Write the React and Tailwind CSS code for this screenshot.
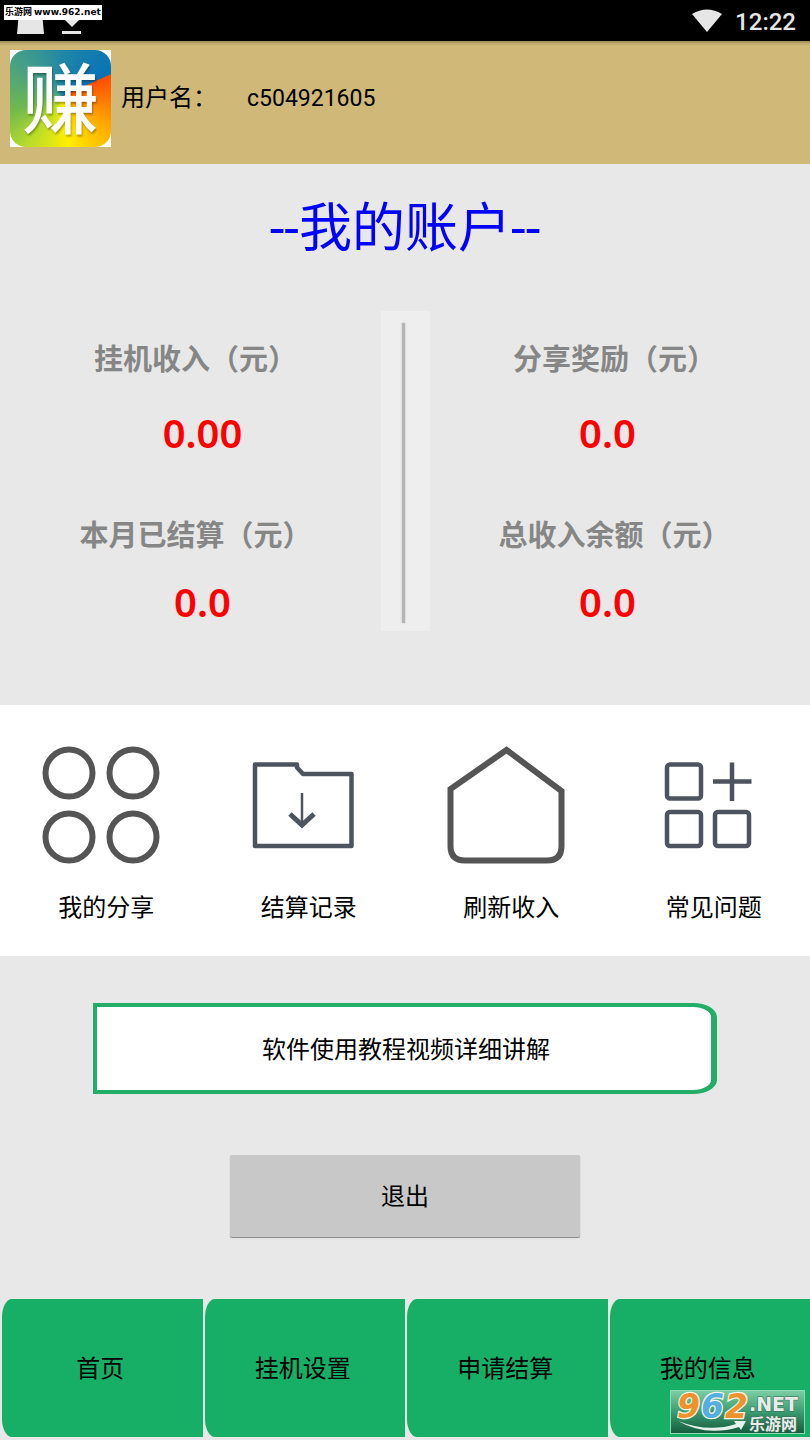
import React from 'react';

const ACCOUNT_ROWS = [
  [
    { label: '挂机收入（元）', value: '0.00' },
    { label: '分享奖励（元）', value: '0.0' }
  ],
  [
    { label: '本月已结算（元）', value: '0.0' },
    { label: '总收入余额（元）', value: '0.0' }
  ]
];

const NAV_ITEMS = ['首页', '挂机设置', '申请结算', '我的信息'];

function CirclesIcon() {
  return (
    <svg width="120" height="120" viewBox="0 0 120 120" fill="none" stroke="#555" strokeWidth="6" aria-hidden="true">
      <circle cx="28" cy="28" r="23.5" />
      <circle cx="92" cy="28" r="23.5" />
      <circle cx="28" cy="92" r="23.5" />
      <circle cx="92" cy="92" r="23.5" />
    </svg>
  );
}

function FolderIcon() {
  return (
    <svg width="120" height="120" viewBox="0 0 120 120" fill="none" stroke="#4d545f" strokeWidth="4.5" aria-hidden="true">
      <path d="M11 19.5H53V22.5L59 29H107.5V101H11Z" strokeLinejoin="round" />
      <path d="M58 48V78" strokeWidth="2.5" />
      <path d="M46 69L58 80L70 69" strokeWidth="5" />
    </svg>
  );
}

function HouseIcon() {
  return (
    <svg width="120" height="120" viewBox="0 0 120 120" fill="none" stroke="#555" strokeWidth="6" aria-hidden="true">
      <path d="M60.5 5L115.5 46V101Q115.5 115.5 101 115.5H19Q4.5 115.5 4.5 101V44Z" />
    </svg>
  );
}

function GridPlusIcon() {
  return (
    <svg width="120" height="120" viewBox="0 0 120 120" fill="none" stroke="#4d545f" strokeWidth="4.5" aria-hidden="true">
      <rect x="18" y="19.5" width="34" height="34" rx="3" />
      <rect x="18" y="67" width="34" height="34" rx="3" />
      <rect x="66" y="67" width="34" height="34" rx="3" />
      <path d="M83 17.5V56M64 36.5H102.5" />
    </svg>
  );
}

const SHORTCUTS = [
  { label: '我的分享', icon: <CirclesIcon /> },
  { label: '结算记录', icon: <FolderIcon /> },
  { label: '刷新收入', icon: <HouseIcon /> },
  { label: '常见问题', icon: <GridPlusIcon /> }
];

function StatusBar() {
  return (
    <div className="relative flex h-[41px] items-center justify-between bg-black pl-4 pr-3.5">
      <svg width="68" height="41" viewBox="0 0 68 41" fill="#e6e6e6" aria-hidden="true">
        <path d="M3 12H26L28 34H1Z" />
        <path d="M52 10H60V19H64L56 27L48 19H52Z" />
        <path d="M46 31H65V34H46Z" />
      </svg>
      <div className="flex items-center gap-3">
        <svg width="32" height="24" viewBox="0 0 32 24" fill="#e6e6e6" aria-hidden="true">
          <path d="M1 5Q16 -4 31 5L16 23Z" />
        </svg>
        <span className="pt-0.5 text-2xl leading-8 font-medium text-[#e6e6e6]">12:22</span>
      </div>
      <div className="absolute left-1 top-[5px] flex h-[15px] items-center gap-0.5 bg-white px-px font-['DejaVu_Sans','Noto_Sans_CJK_SC',sans-serif] text-[9px] leading-none font-bold whitespace-nowrap text-black">
        <span>乐游网</span>
        <span>www.962.net</span>
      </div>
    </div>
  );
}

function AppLogo() {
  return (
    <div className="h-[97px] w-[101px] shrink-0 bg-white">
      <div className="flex size-full items-center justify-center rounded-2xl bg-[conic-gradient(at_51%_48%,#2187a5_0deg,#0872b8_65deg,#ff4d00_66deg,#ff7a00_95deg,#ffb400_130deg,#fff000_172deg,#b9dc28_215deg,#6fb84f_255deg,#49a184_305deg,#2187a5_360deg)] pt-2">
        <span className="text-[77px] leading-none font-medium text-white [text-shadow:1px_2px_2px_rgb(0_0_0/0.3)]">赚</span>
      </div>
    </div>
  );
}

function AccountRow({ items, first }) {
  return (
    <div className="grid grid-cols-2 text-center">
      {items.map(({ label, value }, i) => (
        <div key={label}>
          <div className={`text-[29px] leading-10 font-bold text-[#868686] ${i === 0 ? 'pr-3.5' : 'pl-3.5'}`}>{label}</div>
          <div
            className={`font-['Noto_Sans','Open_Sans',sans-serif] text-[40px] leading-12 font-semibold text-[#ff0000] ${first ? 'mt-[29px]' : 'mt-[22px]'}`}
          >
            {value}
          </div>
        </div>
      ))}
    </div>
  );
}

function SiteBadge() {
  return (
    <div className="absolute right-[5px] bottom-[6px]">
      <svg width="135" height="44" viewBox="0 0 135 44" className="overflow-visible" role="img" aria-label="962.NET 乐游网">
        <defs>
          <linearGradient id="badge" x1="0" y1="0" x2="0" y2="1">
            <stop offset="0" stopColor="#7ccfa4" />
            <stop offset="0.5" stopColor="#3b9b70" />
            <stop offset="1" stopColor="#145c3c" />
          </linearGradient>
        </defs>
        <rect x="0.5" y="0.5" width="134" height="43" fill="url(#badge)" stroke="#8ed9b3" />
        <g fontFamily="'DejaVu Sans', sans-serif" fontWeight="700" fontStyle="italic" fontSize="33" stroke="#f4f4e8" strokeWidth="2.5" paintOrder="stroke">
          <text x="7" y="28" fill="#f0922b">9</text>
          <text x="31" y="28" fill="#55aee0">6</text>
          <text x="55" y="28" fill="#f0922b">2</text>
        </g>
        <path d="M8 31Q38 43 66 34L64 31L76 31L71 40L69 37Q36 47 8 31Z" fill="#e8f2ec" />
        <g fill="#e4eee8" stroke="#45665a" strokeWidth="1" paintOrder="stroke">
          <text x="79" y="21" fontFamily="'DejaVu Sans', sans-serif" fontWeight="700" fontSize="19">.NET</text>
          <text x="79" y="40" fontFamily="'Noto Sans CJK SC', sans-serif" fontWeight="700" fontSize="16">乐游网</text>
        </g>
      </svg>
    </div>
  );
}

export default function App() {
  return (
    <div className="flex min-h-screen flex-col bg-[#e8e8e8] font-['Roboto','Noto_Sans_CJK_SC',sans-serif] text-2xl text-black">
      <StatusBar />

      <header className="flex items-center bg-[#cfb878] px-2.5 pt-[9px] pb-[17px] shadow-[inset_0_5px_3px_-3px_rgb(0_0_0/0.25)]">
        <AppLogo />
        <div className="flex items-baseline pl-2.5">
          <span>用户名：</span>
          <span className="pl-[30px] text-[23px]">c504921605</span>
        </div>
      </header>

      <main className="flex flex-1 flex-col">
        <section className="pt-[25px] pb-[74px]">
          <h1 className="text-center text-[53px] leading-20 text-[#0000ff]">--我的账户--</h1>
          <div className="mt-[42px] grid">
            <div className="col-start-1 row-start-1 flex h-80 w-[49px] justify-center justify-self-center bg-[#eee] pt-3 pr-1 pb-2">
              <div className="w-[3px] bg-[#b5b5b5] shadow-[0_0_2px_#b5b5b5]" />
            </div>
            <div className="col-start-1 row-start-1 flex flex-col gap-[59px] pt-[29px]">
              {ACCOUNT_ROWS.map((items, i) => (
                <AccountRow key={items[0].label} items={items} first={i === 0} />
              ))}
            </div>
          </div>
        </section>

        <section className="grid grid-cols-4 bg-white pt-10 pb-[30px]">
          {SHORTCUTS.map((s) => (
            <button key={s.label} type="button" className="flex flex-col items-center">
              {s.icon}
              <span className="mt-[25px] pl-2.5 leading-9">{s.label}</span>
            </button>
          ))}
        </section>

        <section className="flex flex-col items-center pt-[47px]">
          <button
            type="button"
            className="h-[91px] w-[77%] rounded-[0_24px_24px_0/0_14px_14px_0] border-4 border-r-6 border-[#22ad69] bg-white pt-0.5 pl-1"
          >
            软件使用教程视频详细讲解
          </button>
          <button
            type="button"
            className="mt-[61px] h-[82px] w-[350px] max-w-full rounded-xs bg-[#c8c8c8] pt-0.5 shadow-[0_1px_1px_#888]"
          >
            退出
          </button>
        </section>
      </main>

      <nav className="relative grid grid-cols-4 pb-[3px]">
        {NAV_ITEMS.map((item) => (
          <button
            key={item}
            type="button"
            className="ml-0.5 h-[138px] rounded-[10px_0_0_10px/18px_0_0_18px] bg-[#17ae66] pt-0.5 pr-1"
          >
            {item}
          </button>
        ))}
        <SiteBadge />
      </nav>
    </div>
  );
}
